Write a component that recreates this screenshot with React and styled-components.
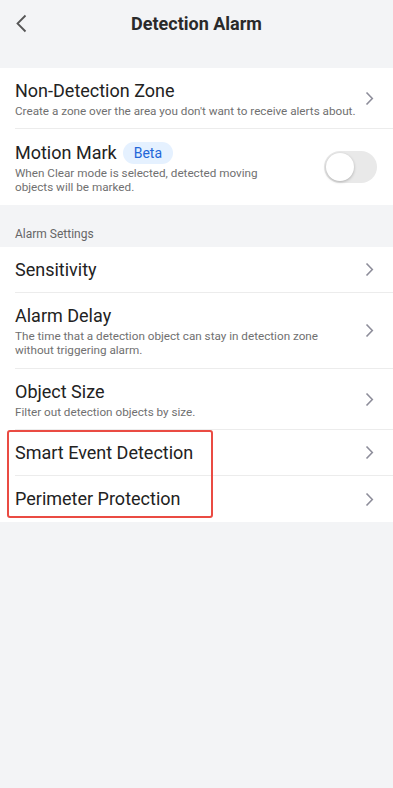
import React, { useState } from "react";
import styled, { createGlobalStyle } from "styled-components";

const GlobalStyle = createGlobalStyle`
  html, body {
    margin: 0;
    padding: 0;
    background: #f3f4f6;
    font-family: Roboto, "Noto Sans", "Liberation Sans", sans-serif;
  }
  * { box-sizing: border-box; }
`;

const Chevron = ({ left }) => (
  <svg width={left ? 12 : 9} height={left ? 19 : 15} viewBox={left ? "0 0 12 19" : "0 0 9 15"}>
    {left ? (
      <path d="M10.5 1.5 L2.5 9.5 L10.5 17.5" fill="none" stroke="#555" strokeWidth="1.8" />
    ) : (
      <path d="M1.5 1.5 L7.3 7.5 L1.5 13.5" fill="none" stroke="#8d8d9a" strokeWidth="1.6" />
    )}
  </svg>
);

function App() {
  const [motion, setMotion] = useState(false);

  return (
    <Page>
      <GlobalStyle />
      <Header>
        <BackButton>
          <Chevron left />
        </BackButton>
        <Title>Detection Alarm</Title>
      </Header>

      <Card>
        <Row>
          <RowText>
            <RowTitle>Non-Detection Zone</RowTitle>
            <RowSub>Create a zone over the area you don't want to receive alerts about.</RowSub>
          </RowText>
          <Chevron />
        </Row>
        <Row last tall>
          <RowText>
            <RowTitle>
              Motion Mark <Badge>Beta</Badge>
            </RowTitle>
            <RowSub width="250px">When Clear mode is selected, detected moving objects will be marked.</RowSub>
          </RowText>
          <Toggle on={motion} onClick={() => setMotion(!motion)}>
            <Knob on={motion} />
          </Toggle>
        </Row>
      </Card>

      <SectionLabel>Alarm Settings</SectionLabel>

      <Card>
        <Row single>
          <RowText>
            <RowTitle>Sensitivity</RowTitle>
          </RowText>
          <Chevron />
        </Row>
        <Row tall>
          <RowText>
            <RowTitle>Alarm Delay</RowTitle>
            <RowSub width="315px">The time that a detection object can stay in detection zone without triggering alarm.</RowSub>
          </RowText>
          <Chevron />
        </Row>
        <Row>
          <RowText>
            <RowTitle>Object Size</RowTitle>
            <RowSub>Filter out detection objects by size.</RowSub>
          </RowText>
          <Chevron />
        </Row>
        <Highlighted>
          <Row single>
            <RowText>
              <RowTitle>Smart Event Detection</RowTitle>
            </RowText>
            <Chevron />
          </Row>
          <Row single last>
            <RowText>
              <RowTitle>Perimeter Protection</RowTitle>
            </RowText>
            <Chevron />
          </Row>
          <RedBox />
        </Highlighted>
      </Card>
    </Page>
  );
}

const Page = styled.div`
  min-height: 788px;
  background: #f3f4f6;
  padding-bottom: 20px;
`;

const Header = styled.div`
  position: relative;
  height: 68px;
  display: flex;
  justify-content: center;
  padding-top: 12px;
`;

const BackButton = styled.div`
  position: absolute;
  left: 15px;
  top: 14px;
  display: flex;
`;

const Title = styled.h1`
  margin: 0;
  font-size: 18px;
  font-weight: 700;
  color: #2a2a2a;
  line-height: 24px;
`;

const Card = styled.div`
  background: #fff;
`;

const Row = styled.div`
  display: flex;
  align-items: center;
  justify-content: space-between;
  margin-left: 15px;
  padding-right: 19px;
  min-height: ${(p) => (p.single ? "46px" : p.tall ? "76px" : "61px")};
  border-bottom: ${(p) => (p.last ? "none" : "1px solid #ececec")};
`;

const RowText = styled.div`
  display: flex;
  flex-direction: column;
`;

const RowTitle = styled.div`
  display: flex;
  align-items: center;
  gap: 6px;
  font-size: 18px;
  color: #222;
  line-height: 24px;
`;

const RowSub = styled.div`
  font-size: 11.7px;
  color: #707070;
  line-height: 14px;
  margin-top: 1px;
  max-width: ${(p) => p.width || "none"};
`;

const Badge = styled.span`
  display: inline-flex;
  align-items: center;
  height: 22px;
  padding: 0 11px;
  border-radius: 11px;
  background: #e5f1ff;
  color: #2266d8;
  font-size: 14px;
`;

const Toggle = styled.div`
  flex-shrink: 0;
  width: 53px;
  height: 32px;
  border-radius: 16px;
  background: ${(p) => (p.on ? "#2b7de9" : "#e9e9e9")};
  padding: 2px;
  cursor: pointer;
  margin-right: -3px;
`;

const Knob = styled.div`
  width: 28px;
  height: 28px;
  border-radius: 50%;
  background: #fff;
  box-shadow: 0 1px 3px rgba(0, 0, 0, 0.25);
  transform: translateX(${(p) => (p.on ? "21px" : "0")});
  transition: transform 0.2s;
`;

const SectionLabel = styled.div`
  padding: 22px 15px 6px;
  font-size: 12px;
  color: #666;
  line-height: 14px;
`;

const Highlighted = styled.div`
  position: relative;
`;

const RedBox = styled.div`
  position: absolute;
  left: 7px;
  top: 0;
  width: 206px;
  height: 88px;
  border: 2px solid #ea4b43;
  border-radius: 3px;
  pointer-events: none;
`;

export default App;
